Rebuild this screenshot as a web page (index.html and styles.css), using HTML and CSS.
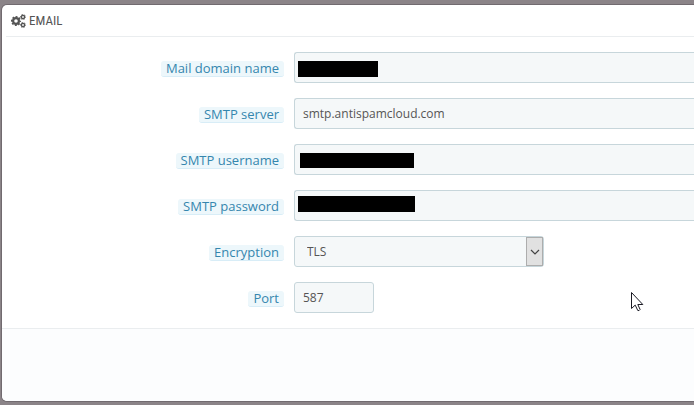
FILE: index.html
```html
<!DOCTYPE html>
<html lang="en">
<head>
    <meta charset="UTF-8">
    <meta name="viewport" content="width=device-width, initial-scale=1.0">
    <title>Email</title>
    <link rel="stylesheet" href="styles.css">
</head>
<body>
    <form class="panel">
        <h3 class="panel-heading">
            <svg class="icon-cogs" viewBox="0 0 15 14" width="15" height="14" aria-hidden="true">
                <circle cx="5" cy="7" r="2.9" fill="none" stroke="currentColor" stroke-width="2.2"/>
                <circle cx="5" cy="7" r="4.3" fill="none" stroke="currentColor" stroke-width="1.6" stroke-dasharray="1.9 1.477" stroke-dashoffset="0.95"/>
                <circle cx="12" cy="3" r="1.6" fill="none" stroke="currentColor" stroke-width="1.4"/>
                <circle cx="12" cy="3" r="2.5" fill="none" stroke="currentColor" stroke-width="1" stroke-dasharray="1.4 1.218" stroke-dashoffset="0.7"/>
                <circle cx="12" cy="11" r="1.6" fill="none" stroke="currentColor" stroke-width="1.4"/>
                <circle cx="12" cy="11" r="2.5" fill="none" stroke="currentColor" stroke-width="1" stroke-dasharray="1.4 1.218" stroke-dashoffset="0.7"/>
            </svg>
            <span>EMAIL</span>
        </h3>

        <div class="form-wrapper">
            <div class="form-group">
                <label for="mailDomain"><span class="label-tooltip">Mail domain name</span></label>
                <div class="field">
                    <input type="text" id="mailDomain">
                    <span class="mask mask-domain"></span>
                </div>
            </div>
            <div class="form-group">
                <label for="smtpServer"><span class="label-tooltip">SMTP server</span></label>
                <div class="field">
                    <input type="text" id="smtpServer" value="smtp.antispamcloud.com">
                </div>
            </div>
            <div class="form-group">
                <label for="smtpUser"><span class="label-tooltip">SMTP username</span></label>
                <div class="field">
                    <input type="text" id="smtpUser">
                    <span class="mask mask-user"></span>
                </div>
            </div>
            <div class="form-group">
                <label for="smtpPassword"><span class="label-tooltip">SMTP password</span></label>
                <div class="field">
                    <input type="password" id="smtpPassword">
                    <span class="mask mask-password"></span>
                </div>
            </div>
            <div class="form-group">
                <label for="encryption"><span class="label-tooltip">Encryption</span></label>
                <div class="field field-select">
                    <select id="encryption">
                        <option>None</option>
                        <option selected>TLS</option>
                        <option>SSL</option>
                    </select>
                    <span class="select-arrow">
                        <svg viewBox="0 0 10 6" width="10" height="6" aria-hidden="true">
                            <path d="M1 1l4 4 4-4" fill="none" stroke="#444" stroke-width="1.2"/>
                        </svg>
                    </span>
                </div>
            </div>
            <div class="form-group">
                <label for="port"><span class="label-tooltip">Port</span></label>
                <div class="field field-port">
                    <input type="text" id="port" value="587">
                </div>
            </div>
        </div>

        <div class="panel-footer"></div>
    </form>

    <svg class="cursor" viewBox="0 0 13 20" width="13" height="20" aria-hidden="true">
        <path d="M.5 .5v16l3.7-3.4 2.6 5.4q1.4 .6 2.3-1l-2.3-5h5z" fill="#fff" stroke="#1a1a24"/>
    </svg>
</body>
</html>
```
FILE: styles.css
```css
* {
    box-sizing: border-box;
}
body {
    margin: 0;
    padding: 5px 0 4px 2px;
    background-color: #8b8488;
    color: #555;
    font-family: "Open Sans", "Noto Sans", sans-serif;
    font-size: 12px;
    overflow: hidden;
}
.panel {
    background-color: #fff;
    border-radius: 5px 0 0 5px;
    box-shadow: 0 0 0 1px #716a6f;
    overflow: hidden;
}
.panel-heading {
    display: flex;
    align-items: center;
    gap: 3px;
    height: 32px;
    margin: 0 0 0 4px;
    padding-left: 5px;
    border-bottom: 1px solid #eaedef;
    font-family: "Roboto Condensed", Roboto, sans-serif;
    font-size: 13px;
    font-weight: 400;
}
.form-wrapper {
    display: grid;
    gap: 15px;
    padding: 15px 0;
}
.form-group {
    display: grid;
    grid-template-columns: 282px 1fr;
    column-gap: 10px;
}
label {
    padding-top: 8px;
    text-align: right;
    font-size: 13px;
    line-height: 16px;
    color: #3586ae;
}
.label-tooltip {
    display: inline-block;
    padding: 0 5px;
    background-color: #edf7fb;
    border-bottom: 1px solid #d8edf7;
    border-radius: 3px;
    line-height: 15px;
}
.field {
    position: relative;
    height: 31px;
}
input,
select {
    display: block;
    width: 100%;
    height: 31px;
    margin: 0;
    padding: 0 8px;
    border: 1px solid #c7d6db;
    border-right-width: 0;
    border-radius: 3px 0 0 3px;
    background-color: #f5f8f9;
    color: #555;
    font-family: inherit;
    font-size: 12px;
    outline: none;
}
select {
    padding-left: 12px;
    appearance: none;
}
.field-select {
    width: 250px;
}
.field-port {
    width: 80px;
}
.field-select select,
.field-port input {
    border-right-width: 1px;
    border-radius: 3px;
}
.select-arrow {
    position: absolute;
    top: 1px;
    right: 1px;
    display: flex;
    align-items: center;
    justify-content: center;
    width: 17px;
    height: 29px;
    border: 1px solid #adadad;
    background-color: #e1e1e1;
    pointer-events: none;
}
.mask {
    position: absolute;
    height: 16px;
    background-color: #000;
}
.mask-domain {
    top: 9px;
    left: 4px;
    width: 80px;
}
.mask-user {
    top: 9px;
    left: 6px;
    width: 114px;
    height: 15px;
}
.mask-password {
    top: 6px;
    left: 4px;
    width: 117px;
}
.panel-footer {
    height: 73px;
    border-top: 1px solid #eaedef;
    background-color: #fcfdfe;
}
.cursor {
    position: absolute;
    top: 292px;
    left: 631px;
}
```
